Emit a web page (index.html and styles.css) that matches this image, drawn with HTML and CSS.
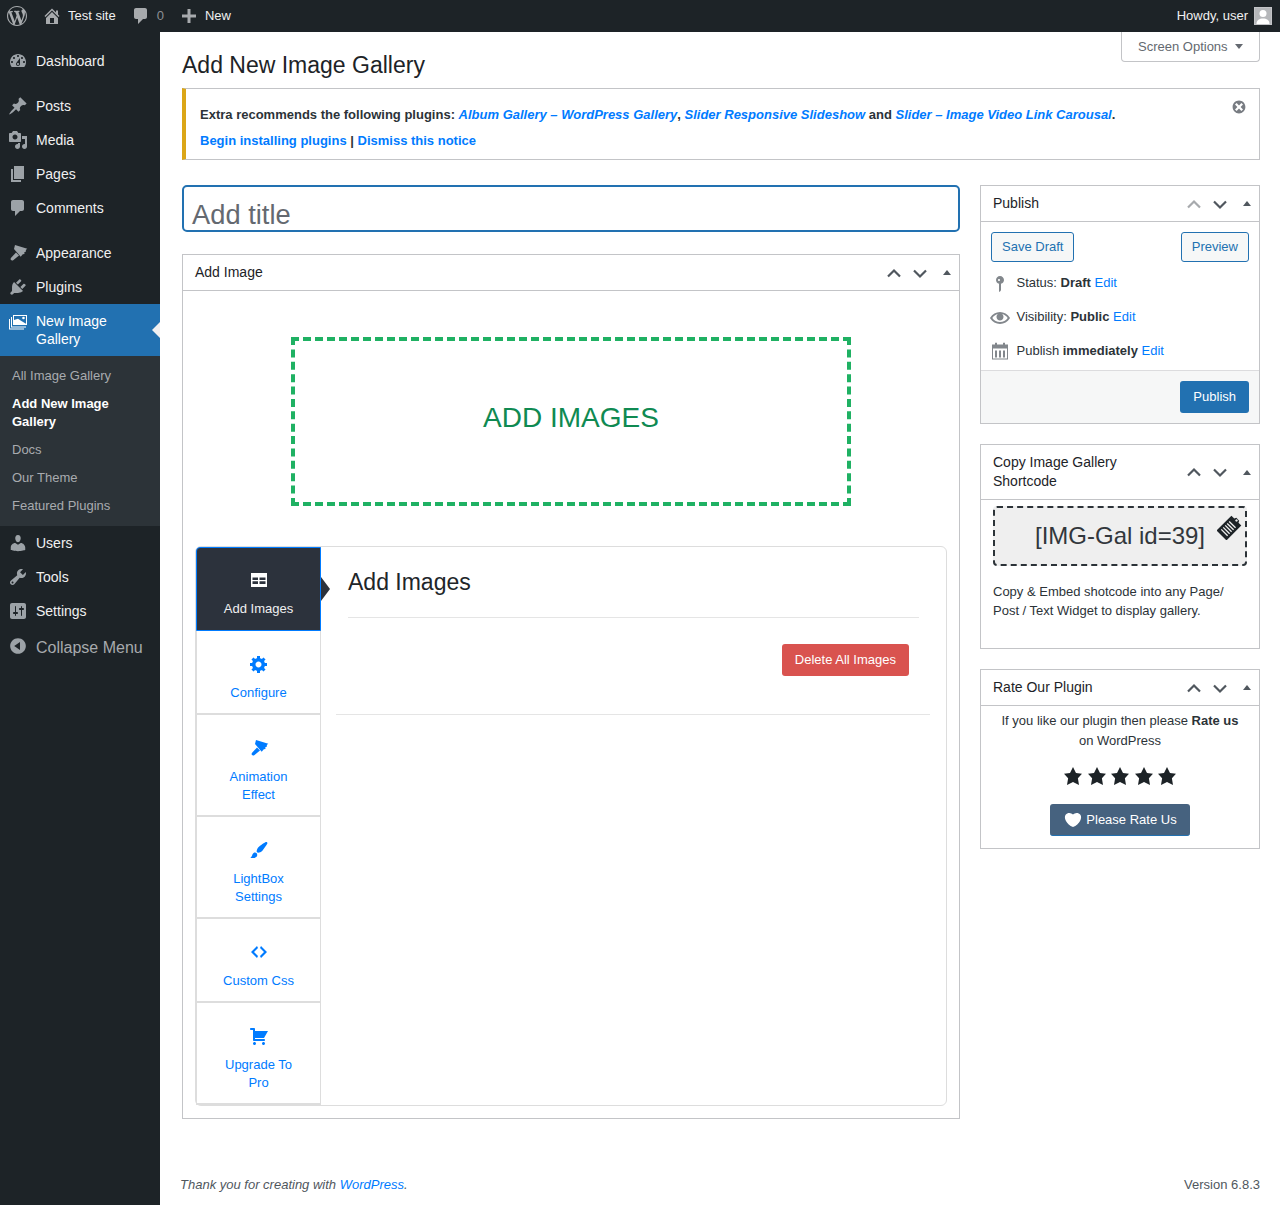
FILE: index.html
```html
<!DOCTYPE html>
<html lang="en">
<head>
    <meta charset="UTF-8">
    <title>Add New Image Gallery</title>
    <link rel="stylesheet" href="styles.css">
</head>
<body>
<div class="adminbar">
    <svg class="bar-icon bar-logo" viewBox="0 0 20 20"><path d="M20 10c0-5.51-4.49-10-10-10C4.48 0 0 4.49 0 10c0 5.52 4.48 10 10 10 5.51 0 10-4.48 10-10zM7.78 15.37L4.37 6.22c.55-.02 1.17-.08 1.17-.08.5-.06.44-1.13-.06-1.11 0 0-1.45.11-2.37.11-.18 0-.37 0-.58-.01C4.12 2.69 6.87 1.11 10 1.11c2.33 0 4.45.87 6.05 2.34-.68-.11-1.65.39-1.65 1.58 0 .74.45 1.36.9 2.1.35.61.55 1.36.55 2.46 0 1.49-1.4 5-1.4 5l-3.03-8.37c.54-.02.82-.17.82-.17.5-.05.44-1.25-.06-1.22 0 0-1.44.12-2.38.12-.87 0-2.33-.12-2.33-.12-.5-.03-.56 1.2-.06 1.22l.92.08 1.26 3.41zM17.41 10c.24-.64.74-1.87.43-4.25.7 1.29 1.05 2.71 1.05 4.25 0 3.29-1.73 6.24-4.4 7.78.97-2.59 1.94-5.2 2.92-7.78zM6.1 18.09C3.12 16.65 1.11 13.53 1.11 10c0-1.3.23-2.48.72-3.59C3.25 10.3 4.67 14.2 6.1 18.09zm4.03-6.63l2.58 6.98c-.86.29-1.76.45-2.71.45-.79 0-1.57-.11-2.29-.33.81-2.38 1.62-4.74 2.42-7.1z"/></svg>
    <svg class="bar-icon bar-home" viewBox="0 0 20 20"><path d="M16 8.5l1.53 1.53-1.06 1.06L10 4.62l-6.47 6.47-1.06-1.06L10 2.5l4 4v-2h2v4zm-6-2.46l6 5.99V18H4v-5.97zM12 17v-5H8v5h4z"/></svg>
    <span class="bar-text bar-site">Test site</span>
    <svg class="bar-icon bar-comment" viewBox="0 0 20 20"><path d="M5 2h9c1.100 0 2 .9 2 2v7c0 1.100-.9 2-2 2h-2l-5 5v-5H5c-1.100 0-2-.9-2-2V4c0-1.100.9-2 2-2z"/></svg>
    <span class="bar-count">0</span>
    <svg class="bar-icon bar-plus" viewBox="0 0 20 20"><path d="M17 8.500v3h-5.500V17h-3v-5.500H3v-3h5.500V3h3v5.500H17z"/></svg>
    <span class="bar-text">New</span>
    <span class="bar-text bar-howdy">Howdy, user</span>
    <span class="avatar"><svg viewBox="0 0 16 16"><circle cx="8" cy="5.500" r="3.500"/><path d="M1.500 16c0-4 3-5.500 6.500-5.500s6.500 1.500 6.500 5.500z"/></svg></span>
</div>

<div class="layout">
    <nav class="menu">
        <a class="menu-item first"><svg viewBox="0 0 20 20"><path d="M3.760 16h12.480c1.100-1.370 1.760-3.110 1.760-5 0-4.420-3.580-8-8-8s-8 3.580-8 8c0 1.890.66 3.630 1.760 5zM10 4c.55 0 1 .45 1 1s-.45 1-1 1-1-.45-1-1 .45-1 1-1zM6 6c.55 0 1 .45 1 1s-.45 1-1 1-1-.45-1-1 .45-1 1-1zm8 0c.55 0 1 .45 1 1s-.45 1-1 1-1-.45-1-1 .45-1 1-1zm-5.370 5.550L12 7v6c0 1.100-.9 2-2 2s-2-.9-2-2c0-.57.24-1.080.63-1.450zM4 10c.55 0 1 .45 1 1s-.45 1-1 1-1-.45-1-1 .45-1 1-1zm12 0c.55 0 1 .45 1 1s-.45 1-1 1-1-.45-1-1 .45-1 1-1zm-5 3c0-.55-.45-1-1-1s-1 .45-1 1 .45 1 1 1 1-.45 1-1z" fill-rule="evenodd"/></svg>Dashboard</a>
        <a class="menu-item sep"><svg viewBox="0 0 20 20"><path d="M10.440 3.020l1.820-1.820 6.360 6.350-1.830 1.820c-1.050-.68-2.480-.57-3.410.36l-.75.75c-.92.93-1.040 2.350-.35 3.410l-1.830 1.820-2.410-2.410-2.800 2.790c-.42.42-3.380 2.710-3.800 2.290s1.860-3.390 2.280-3.810l2.790-2.790L4.100 9.360l1.830-1.820c1.050.69 2.480.57 3.400-.36l.75-.75c.93-.92 1.050-2.350.36-3.410z"/></svg>Posts</a>
        <a class="menu-item"><svg viewBox="0 0 20 20"><path d="M13 11V4c0-.55-.45-1-1-1h-1.670L9 1H5L3.670 3H2c-.55 0-1 .45-1 1v7c0 .55.45 1 1 1h10c.55 0 1-.45 1-1zM7 4.500c1.380 0 2.500 1.120 2.500 2.500S8.380 9.500 7 9.500 4.500 8.380 4.500 7 5.620 4.500 7 4.500zM14 6h5v10.500c0 1.380-1.120 2.500-2.500 2.500S14 17.880 14 16.500s1.120-2.500 2.500-2.500c.17 0 .34.02.5.05V9h-3V6zm-4 8.050V13h2v3.500c0 1.380-1.120 2.500-2.500 2.500S7 17.880 7 16.500 8.120 14 9.500 14c.17 0 .34.02.5.05z"/></svg>Media</a>
        <a class="menu-item"><svg viewBox="0 0 20 20"><path d="M6 15V2h10v13H6zm-1 1h8v2H3V5h2v11z"/></svg>Pages</a>
        <a class="menu-item"><svg viewBox="0 0 20 20"><path d="M5 2h9c1.100 0 2 .9 2 2v7c0 1.100-.9 2-2 2h-2l-5 5v-5H5c-1.100 0-2-.9-2-2V4c0-1.100.9-2 2-2z"/></svg>Comments</a>
        <a class="menu-item sep"><svg viewBox="0 0 20 20"><path d="M7 2l12.300 3.800-1.500 1.300.2 1.500-1.700.6.2 1.700-1.700.4-2.100 2.400L6 6zM8 9.500l3 3-5.500 4.500c-.8.7-1.900.7-2.500.1s-.6-1.500.1-2.300z"/></svg>Appearance</a>
        <a class="menu-item"><svg viewBox="0 0 20 20"><path d="M13.110 4.360L9.870 7.600 8 5.730l3.240-3.240c.35-.34 1.050-.2 1.560.32.52.51.66 1.210.31 1.550zm-8 1.770l.91-1.120 9.010 9.010-1.190.84c-.71.71-2.630 1.160-3.820 1.160H6.140L4.900 17.260c-.59.59-1.540.59-2.120 0-.59-.58-.59-1.530 0-2.120l1.240-1.240v-3.880c0-1.130.4-3.190 1.090-3.890zm7.260 3.970l3.240-3.240c.34-.35 1.040-.21 1.550.31.52.51.66 1.210.31 1.550l-3.240 3.250z"/></svg>Plugins</a>
        <a class="menu-item current"><svg viewBox="0 0 20 20"><path fill-rule="evenodd" d="M5 4h14v10H5zm1 1v4l4-1.200 3 2 5 3V5zm9.500 .7a1.300 1.300 0 1 0 0 2.600 1.300 1.300 0 0 0 0-2.600zM3 6h1v9.500h14v1H3zM1 8h1v9.500h14v1H1z"/></svg>New Image<br>Gallery</a>
        <div class="submenu">
            <a>All Image Gallery</a>
            <a class="on">Add New Image Gallery</a>
            <a>Docs</a>
            <a>Our Theme</a>
            <a>Featured Plugins</a>
        </div>
        <a class="menu-item"><svg viewBox="0 0 20 20"><path d="M10 9.250c-2.270 0-2.730-3.440-2.730-3.440C7 4.020 7.820 2 9.970 2c2.160 0 2.980 2.020 2.710 3.810 0 0-.41 3.440-2.680 3.440zm0 2.570L12.720 10c2.390 0 4.520 2.330 4.520 4.530v2.490s-3.650 1.130-7.240 1.130c-3.650 0-7.240-1.130-7.240-1.130v-2.490c0-2.250 1.940-4.480 4.470-4.480z"/></svg>Users</a>
        <a class="menu-item"><svg viewBox="0 0 20 20"><path d="M16.680 9.770c-1.340 1.340-3.300 1.670-4.950.99l-5.410 6.520c-.99.99-2.590.99-3.580 0s-.99-2.590 0-3.570l6.520-5.420c-.68-1.650-.35-3.610.99-4.950 1.280-1.280 3.120-1.620 4.720-1.060l-2.890 2.890 2.820 2.820 2.860-2.870c.53 1.580.18 3.390-1.080 4.650zM3.810 16.210c.4.39 1.040.39 1.430 0 .4-.4.4-1.040 0-1.430-.39-.4-1.030-.4-1.430 0-.39.39-.39 1.030 0 1.430z"/></svg>Tools</a>
        <a class="menu-item"><svg viewBox="0 0 20 20"><path d="M18 16V4c0-1.100-.9-2-2-2H4c-1.100 0-2 .9-2 2v12c0 1.100.9 2 2 2h12c1.100 0 2-.9 2-2zM8 11h1c.55 0 1 .45 1 1s-.45 1-1 1H8v1.500c0 .28-.22.5-.5.5s-.5-.22-.5-.5V13H6c-.55 0-1-.45-1-1s.45-1 1-1h1V5.500c0-.28.22-.5.5-.5s.5.22.5.5V11zm5-2h-1c-.55 0-1-.45-1-1s.45-1 1-1h1V5.500c0-.28.22-.5.5-.5s.5.22.5.5V7h1c.55 0 1 .45 1 1s-.45 1-1 1h-1v5.500c0 .28-.22.5-.5.5s-.5-.22-.5-.5V9z"/></svg>Settings</a>
        <a class="menu-item collapse"><svg viewBox="0 0 20 20"><path d="M10 2.160c4.330 0 7.840 3.510 7.840 7.840s-3.510 7.840-7.840 7.840S2.160 14.330 2.160 10 5.710 2.160 10 2.160zm2 11.720V6.120L6.180 9.970z"/></svg>Collapse Menu</a>
    </nav>

    <main class="main">
        <div class="wpbody">
            <a class="screen-options">Screen Options<i class="down-tri"></i></a>
            <h1>Add New Image Gallery</h1>

            <div class="notice">
                <svg class="notice-close" viewBox="0 0 20 20"><path d="M10 2c4.420 0 8 3.580 8 8s-3.580 8-8 8-8-3.580-8-8 3.580-8 8-8zm5 11l-3-3 3-3-2-2-3 3-3-3-2 2 3 3-3 3 2 2 3-3 3 3z"/></svg>
                <p>Extra recommends the following plugins: <a><em>Album Gallery – WordPress Gallery</em></a>, <a><em>Slider Responsive Slideshow</em></a> and <a><em>Slider – Image Video Link Carousal</em></a>.</p>
                <p><a>Begin installing plugins</a> | <a>Dismiss this notice</a></p>
            </div>

            <div class="columns">
                <div class="col-main">
                    <div class="title-field">Add title</div>

                    <section class="box">
                        <header class="box-head">
                            <h2>Add Image</h2>
                            <div class="handles">
                                <svg viewBox="0 0 20 20"><path d="M4 13.500l6-6 6 6"/></svg>
                                <svg viewBox="0 0 20 20"><path d="M4 7.500l6 6 6-6"/></svg>
                                <i class="up-tri"></i>
                            </div>
                        </header>
                        <div class="image-body">
                            <div class="add-images">ADD IMAGES</div>
                            <div class="tabs">
                                <div class="tab-list">
                                    <a class="tab active">
                                        <svg viewBox="0 0 20 20"><path fill-rule="evenodd" d="M2 3h16v14H2zm1.500 4.500v2.400H9V7.500zm7 0v2.400h6V7.500zm-7 3.800v2.700H9v-2.700zm7 0v2.700h6v-2.700z"/></svg>
                                        <span>Add Images</span>
                                    </a>
                                    <a class="tab">
                                        <svg viewBox="0 0 20 20"><path d="M18 12h-2.180c-.17.7-.44 1.350-.81 1.930l1.540 1.540-2.100 2.100-1.540-1.540c-.58.36-1.230.63-1.910.79V19H8v-2.180c-.68-.16-1.330-.43-1.910-.79l-1.540 1.540-2.120-2.120 1.540-1.540c-.36-.58-.63-1.230-.79-1.910H1V9.030h2.170c.16-.7.44-1.350.8-1.940L2.430 5.550l2.100-2.100 1.540 1.540c.58-.37 1.240-.64 1.930-.81V2h3v2.180c.68.16 1.330.43 1.910.79l1.540-1.540 2.120 2.120-1.540 1.540c.36.59.64 1.240.8 1.940H18V12zm-8.500 1.500c1.660 0 3-1.340 3-3s-1.340-3-3-3-3 1.340-3 3 1.340 3 3 3z"/></svg>
                                        <span>Configure</span>
                                    </a>
                                    <a class="tab">
                                        <svg viewBox="0 0 20 20"><path d="M7 2l12.300 3.800-1.500 1.300.2 1.500-1.700.6.2 1.700-1.700.4-2.100 2.400L6 6zM8 9.500l3 3-5.500 4.500c-.8.7-1.900.7-2.500.1s-.6-1.500.1-2.300z"/></svg>
                                        <span>Animation<br>Effect</span>
                                    </a>
                                    <a class="tab">
                                        <svg viewBox="0 0 20 20"><path d="M18.330 3.570s.27-.8-.31-1.360c-.53-.52-1.220-.24-1.220-.24-.61.3-5.760 3.470-7.670 5.570-.86.96-2.060 3.790-1.090 4.820.92.98 3.960-.17 4.790-1 2.060-2.060 5.210-7.170 5.500-7.790zM1.400 17.650c2.370-1.560 1.460-3.410 3.230-4.640.93-.65 2.220-.62 3.080.29.63.67.8 2.570-.16 3.460-1.570 1.450-4 1.550-6.150.89z"/></svg>
                                        <span>LightBox<br>Settings</span>
                                    </a>
                                    <a class="tab">
                                        <svg viewBox="0 0 20 20"><path d="M9 6l-4 4 4 4-1 2-6-6 6-6zm2 8l4-4-4-4 1-2 6 6-6 6z"/></svg>
                                        <span>Custom Css</span>
                                    </a>
                                    <a class="tab">
                                        <svg viewBox="0 0 20 20"><path d="M6 13h9c.55 0 1 .45 1 1s-.45 1-1 1H5c-.55 0-1-.45-1-1V4H2c-.55 0-1-.45-1-1s.45-1 1-1h3c.55 0 1 .45 1 1v2h13l-4 7H6v1zm-.5 3c.83 0 1.500.67 1.500 1.500S6.330 19 5.500 19 4 18.330 4 17.500 4.670 16 5.500 16zm9 0c.83 0 1.500.67 1.500 1.500s-.67 1.500-1.500 1.500-1.500-.67-1.500-1.500.67-1.500 1.500-1.500z"/></svg>
                                        <span>Upgrade To<br>Pro</span>
                                    </a>
                                </div>
                                <div class="tab-panel">
                                    <h3>Add Images</h3>
                                    <div class="panel-actions"><a class="btn-delete">Delete All Images</a></div>
                                    <hr class="panel-rule">
                                </div>
                            </div>
                        </div>
                    </section>
                </div>

                <aside class="col-side">
                    <section class="box">
                        <header class="box-head">
                            <h2>Publish</h2>
                            <div class="handles">
                                <svg class="faded" viewBox="0 0 20 20"><path d="M4 13.500l6-6 6 6"/></svg>
                                <svg viewBox="0 0 20 20"><path d="M4 7.500l6 6 6-6"/></svg>
                                <i class="up-tri"></i>
                            </div>
                        </header>
                        <div class="pub-actions">
                            <a class="btn-outline">Save Draft</a>
                            <a class="btn-outline">Preview</a>
                        </div>
                        <div class="pub-rows">
                            <div class="pub-row"><svg viewBox="0 0 20 20"><path d="M14 6c0 1.860-1.280 3.410-3 3.860V16c0 1-2 2-2 2V9.860C7.280 9.410 6 7.860 6 6c0-2.210 1.790-4 4-4s4 1.790 4 4zM8 6c0 .55.45 1 1 1s1-.45 1-1-.45-1-1-1-1 .45-1 1z"/></svg><span>Status: <b>Draft</b> <a>Edit</a></span></div>
                            <div class="pub-row"><svg viewBox="0 0 20 20"><path d="M19.700 9.400C17.700 6 14 3.900 10 3.900S2.300 6 .3 9.400L0 10l.3.6c2 3.400 5.700 5.500 9.700 5.500s7.700-2.100 9.700-5.500l.3-.6-.3-.6zM10 14.100c-3.100 0-6-1.600-7.700-4.100C3.600 8 5.700 6.600 8 6.100c-.9.6-1.500 1.700-1.500 2.900 0 1.900 1.600 3.500 3.500 3.500s3.500-1.600 3.500-3.500c0-1.200-.6-2.300-1.500-2.900 2.300.5 4.400 1.900 5.700 3.900-1.700 2.500-4.600 4.100-7.700 4.100z"/></svg><span>Visibility: <b>Public</b> <a>Edit</a></span></div>
                            <div class="pub-row"><svg viewBox="0 0 20 20"><path fill-rule="evenodd" d="M2 2.500h3V.8h2v1.700h6V.8h2v1.700h3v15H2zm1 4v10h14v-10zm2 2h2v7H5zm4 0h2v7H9zm4 0h2v7h-2z"/></svg><span>Publish <b>immediately</b> <a>Edit</a></span></div>
                        </div>
                        <div class="pub-foot"><a class="btn-primary">Publish</a></div>
                    </section>

                    <section class="box">
                        <header class="box-head tall">
                            <h2>Copy Image Gallery<br>Shortcode</h2>
                            <div class="handles">
                                <svg viewBox="0 0 20 20"><path d="M4 13.500l6-6 6 6"/></svg>
                                <svg viewBox="0 0 20 20"><path d="M4 7.500l6 6 6-6"/></svg>
                                <i class="up-tri"></i>
                            </div>
                        </header>
                        <div class="shortcode">[IMG-Gal id=39]
                            <svg class="clip" viewBox="0 0 26 26"><g transform="rotate(45 13 13)"><path fill-rule="evenodd" d="M6 4h4l1-2h4l1 2h4v21H6zm5.800-.2a1.200 1.200 0 1 0 2.400 0 1.200 1.200 0 0 0-2.400 0zM8.500 9v1.300h9V9zm0 2.800v1.300h9v-1.300zm0 2.800v1.300h9v-1.300zm0 2.800v1.300h9v-1.300zm0 2.800v1.300h9v-1.300z"/></g></svg>
                        </div>
                        <p class="shortcode-note">Copy &amp; Embed shotcode into any Page/<br>Post / Text Widget to display gallery.</p>
                    </section>

                    <section class="box">
                        <header class="box-head">
                            <h2>Rate Our Plugin</h2>
                            <div class="handles">
                                <svg viewBox="0 0 20 20"><path d="M4 13.500l6-6 6 6"/></svg>
                                <svg viewBox="0 0 20 20"><path d="M4 7.500l6 6 6-6"/></svg>
                                <i class="up-tri"></i>
                            </div>
                        </header>
                        <div class="rate-body">
                            <p>If you like our plugin then please <b>Rate us</b><br>on WordPress</p>
                            <div class="stars">
                                <svg viewBox="0 0 20 20"><path d="M10 1l3 6 6 .75-4.120 4.620L16 19l-6-3-6 3 1.130-6.630L1 7.750 7 7z"/></svg>
                                <svg viewBox="0 0 20 20"><path d="M10 1l3 6 6 .75-4.120 4.620L16 19l-6-3-6 3 1.130-6.630L1 7.750 7 7z"/></svg>
                                <svg viewBox="0 0 20 20"><path d="M10 1l3 6 6 .75-4.120 4.620L16 19l-6-3-6 3 1.130-6.630L1 7.750 7 7z"/></svg>
                                <svg viewBox="0 0 20 20"><path d="M10 1l3 6 6 .75-4.120 4.620L16 19l-6-3-6 3 1.130-6.630L1 7.750 7 7z"/></svg>
                                <svg viewBox="0 0 20 20"><path d="M10 1l3 6 6 .75-4.120 4.620L16 19l-6-3-6 3 1.130-6.630L1 7.750 7 7z"/></svg>
                            </div>
                            <a class="btn-rate"><svg viewBox="0 0 20 20"><path d="M10 17.120c3.330-1.400 5.740-3.790 7.040-6.210 1.280-2.410 1.460-4.810.32-6.250-1.030-1.290-2.370-1.780-3.730-1.740s-2.680.63-3.630 1.640c-.95-1.010-2.270-1.600-3.630-1.640s-2.700.45-3.730 1.740c-1.140 1.440-.96 3.840.34 6.250 1.280 2.420 3.690 4.810 7.020 6.210z"/></svg>Please Rate Us</a>
                        </div>
                    </section>
                </aside>
            </div>
        </div>

        <footer class="footer">
            <span class="thanks">Thank you for creating with <a>WordPress</a>.</span>
            <span class="version">Version 6.8.3</span>
        </footer>
    </main>
</div>
</body>
</html>
```

FILE: styles.css
```css
* {
    box-sizing: border-box;
}

body {
    margin: 0;
    font-family: "Liberation Sans", Arial, sans-serif;
    font-size: 13px;
    line-height: 18px;
    color: #212529;
    background: #fff;
}

a {
    color: #007bff;
}

/* top bar */
.adminbar {
    display: flex;
    align-items: center;
    height: 32px;
    background: #1d2327;
    color: #f0f0f1;
}

.bar-icon {
    width: 20px;
    height: 20px;
    fill: #a7aaad;
    flex: none;
}

.bar-logo {
    margin-left: 7px;
}

.bar-home {
    margin-left: 15px;
}

.bar-site {
    margin-left: 6px;
}

.bar-comment {
    margin-left: 15px;
}

.bar-count {
    margin-left: 6px;
    color: #8c8f94;
}

.bar-plus {
    margin-left: 15px;
}

.bar-plus + .bar-text {
    margin-left: 6px;
}

.bar-howdy {
    margin-left: auto;
}

.avatar {
    width: 18px;
    height: 18px;
    margin: 0 8px 0 6px;
    background: #b5b7ba;
    border: 1px solid #c3c4c7;
    overflow: hidden;
}

.avatar svg {
    display: block;
    fill: #fff;
}

.layout {
    display: flex;
    min-height: 1173px;
}

/* left menu */
.menu {
    flex: none;
    width: 160px;
    background: #1d2327;
    padding-top: 12px;
}

.menu-item {
    position: relative;
    display: flex;
    align-items: center;
    min-height: 34px;
    padding-left: 8px;
    font-size: 14px;
    color: #f0f0f1;
}

.menu-item svg {
    flex: none;
    width: 20px;
    height: 20px;
    margin-right: 8px;
    fill: #9ca2a7;
}

.menu-item.sep {
    margin-top: 11px;
}

.menu-item.current {
    display: block;
    padding: 8px 0 8px 36px;
    background: #2271b1;
    color: #fff;
}

.menu-item.current svg {
    position: absolute;
    left: 8px;
    top: 7px;
    fill: #fff;
}

.menu-item.current::after {
    content: "";
    position: absolute;
    right: 0;
    top: 18px;
    border: 8px solid transparent;
    border-right-color: #f0f0f1;
    border-left-width: 0;
}

.submenu {
    background: #2c3338;
    padding: 6px 0;
}

.submenu a {
    display: block;
    padding: 5px 12px;
    color: #a8abaf;
}

.submenu a.on {
    color: #fff;
    font-weight: bold;
}

.menu-item.collapse {
    margin-top: 2px;
    min-height: 36px;
    font-size: 16px;
    color: #a7aaad;
}

.menu-item.collapse svg {
    margin-top: -4px;
}

/* main column */
.main {
    flex: 1;
    display: flex;
    flex-direction: column;
    min-width: 0;
}

.wpbody {
    padding: 0 20px 0 22px;
}

.screen-options {
    float: right;
    display: flex;
    align-items: center;
    height: 30px;
    width: 139px;
    padding-left: 16px;
    color: #646970;
    border: 1px solid #c3c4c7;
    border-top: 0;
    border-radius: 0 0 4px 4px;
}

.down-tri {
    margin-left: 7px;
    border: 4.500px solid transparent;
    border-top: 5px solid #646970;
    border-bottom: 0;
}

h1 {
    margin: 0;
    padding-top: 19px;
    height: 56px;
    font-size: 23px;
    font-weight: 400;
    line-height: 29px;
    color: #1d2327;
}

.notice {
    position: relative;
    clear: both;
    height: 72px;
    padding: 17px 14px 0;
    border: 1px solid #c3c4c7;
    border-left: 4px solid #dba617;
    font-weight: bold;
    color: #2c3338;
}

.notice p {
    margin: 0 0 8px;
}

.notice-close {
    position: absolute;
    right: 12px;
    top: 10px;
    width: 16px;
    height: 16px;
    fill: #787c82;
}

.columns {
    display: grid;
    grid-template-columns: 778px 280px;
    gap: 20px;
    margin-top: 25px;
    align-items: start;
}

.title-field {
    height: 47px;
    margin-bottom: 22px;
    padding: 11px 8px 0;
    border: 2px solid #2271b1;
    border-radius: 5px;
    font-size: 27.300px;
    line-height: 34px;
    color: #646970;
}

.col-side .box + .box {
    margin-top: 20px;
}

.box {
    background: #fff;
    border: 1px solid #c3c4c7;
}

.box-head {
    display: flex;
    align-items: center;
    justify-content: space-between;
    height: 36px;
    padding-left: 12px;
    border-bottom: 1px solid #c3c4c7;
}

.box-head.tall {
    height: 55px;
}

.box-head h2 {
    margin: 0;
    font-size: 14px;
    font-weight: 400;
    line-height: 19px;
    color: #1d2327;
}

.handles {
    display: flex;
    align-items: center;
    gap: 6px;
    padding-right: 8px;
}

.handles svg {
    width: 20px;
    height: 20px;
    fill: none;
    stroke: #50575e;
    stroke-width: 2.200;
}

.handles svg.faded {
    stroke: #a7aaad;
}

.up-tri {
    margin-left: 7px;
    border: 4px solid transparent;
    border-bottom: 5px solid #50575e;
    border-top: 0;
}

/* add image box */
.image-body {
    padding: 46px 12px 12px;
}

.add-images {
    width: 560px;
    height: 169px;
    margin: 0 auto 40px;
    border: 4px dashed #1fb163;
    font-size: 28px;
    line-height: 154px;
    text-align: center;
    color: #0f8a52;
}

.tabs {
    display: flex;
    height: 560px;
    border: 1px solid #ddd;
    border-radius: 6px;
}

.tab-list {
    flex: none;
    width: 125px;
    border-right: 1px solid #ddd;
}

.tab {
    position: relative;
    display: block;
    padding: 23px 0 11px;
    border-bottom: 2px solid #ddd;
    border-left: 1px solid #ddd;
    text-align: center;
    color: #007bff;
}

.tab svg {
    display: block;
    width: 20px;
    height: 20px;
    margin: 0 auto 10px;
    fill: #007bff;
}

.tab span {
    display: block;
}

.tab.active {
    width: 125px;
    background: #2c323c;
    color: #f0f0f1;
    border: 1px solid #007bff;
    border-radius: 4px 0 0 0;
    padding: 22px 0 12px;
}

.tab.active svg {
    fill: #fff;
}

.tab.active::after {
    content: "";
    position: absolute;
    left: 124px;
    top: 29px;
    border: 12px solid transparent;
    border-left: 9px solid #2c323c;
    border-right: 0;
}

.tab-panel {
    flex: 1;
    padding: 21px 16px 0 15px;
}

.tab-panel h3 {
    margin: 0 11px 0 12px;
    height: 50px;
    border-bottom: 1px solid #e5e5e5;
    font-size: 23px;
    font-weight: 400;
    line-height: 28px;
    color: #212529;
}

.panel-actions {
    display: flex;
    justify-content: flex-end;
    margin-top: 26px;
    padding-right: 21px;
}

.btn-delete {
    padding: 7px 13px;
    background: #d9534f;
    border-radius: 3px;
    color: #fff;
}

.panel-rule {
    margin: 38px 0 0;
    border: 0;
    border-top: 1px solid #e5e5e5;
}

/* publish box */
.pub-actions {
    display: flex;
    justify-content: space-between;
    padding: 10px 10px 0;
}

.btn-outline {
    height: 30px;
    padding: 0 10px;
    line-height: 28px;
    background: #f6f7f7;
    border: 1px solid #2271b1;
    border-radius: 3px;
    color: #2271b1;
}

.pub-rows {
    display: flex;
    flex-direction: column;
    gap: 16px;
    padding: 12px 10px 10px;
}

.pub-row {
    display: flex;
    align-items: center;
    height: 18px;
    color: #2c3338;
}

.pub-row svg {
    flex: none;
    width: 20px;
    height: 20px;
    margin: 2px 6.500px 0 -1px;
    fill: #82878c;
}

.pub-foot {
    display: flex;
    justify-content: flex-end;
    padding: 10px;
    background: #f6f7f7;
    border-top: 1px solid #dcdcde;
}

.btn-primary {
    height: 32px;
    padding: 0 13px;
    line-height: 31px;
    background: #2271b1;
    border-radius: 3px;
    color: #fff;
}

/* shortcode box */
.shortcode {
    position: relative;
    height: 60px;
    margin: 6px 12px 0;
    border: 2px dashed #2c3338;
    border-radius: 4px;
    background: #efefef;
    font-size: 24px;
    line-height: 56px;
    text-align: center;
    color: #32373c;
}

.clip {
    position: absolute;
    right: 2px;
    top: 6px;
    width: 26px;
    height: 26px;
    fill: #1d2327;
}

.shortcode-note {
    margin: 0;
    padding: 16px 12px 28px;
    line-height: 19px;
    color: #2c3338;
}

/* rate box */
.rate-body {
    padding: 5px 12px 12px;
    text-align: center;
    color: #2c3338;
}

.rate-body p {
    margin: 0;
    line-height: 20px;
}

.stars {
    display: flex;
    justify-content: center;
    gap: 3.500px;
    margin: 15px 0 18px;
}

.stars svg {
    width: 20px;
    height: 20px;
    fill: #1d2327;
}

.btn-rate {
    display: inline-flex;
    align-items: center;
    justify-content: center;
    width: 140px;
    height: 32px;
    vertical-align: top;
    background: #46627f;
    border: 1px solid #2271b1;
    border-width: 0 0 1px;
    border-radius: 3px;
    color: #fff;
}

.btn-rate svg {
    width: 20px;
    height: 20px;
    margin-right: 3px;
    fill: #fff;
}

/* footer */
.footer {
    display: flex;
    justify-content: space-between;
    margin-top: auto;
    padding: 0 20px 11px;
    color: #50575e;
}

.thanks {
    font-style: italic;
}
```
